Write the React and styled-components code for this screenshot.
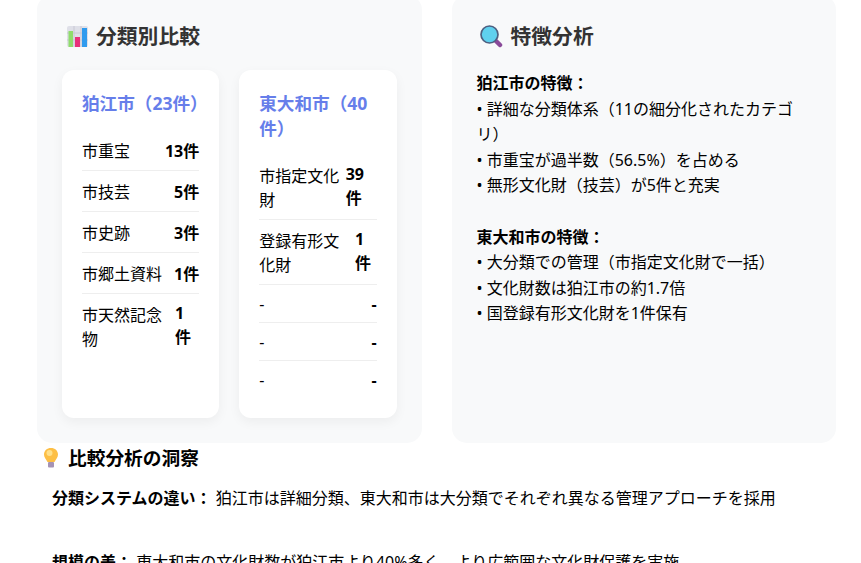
import React from "react";
import styled, { createGlobalStyle } from "styled-components";

const Global = createGlobalStyle`
  html, body { margin: 0; padding: 0; height: 563px; overflow: hidden; background: #fff; }
  body { font-family: "Noto Sans", "Noto Sans CJK JP", sans-serif; font-size: 16px; line-height: 1.6; color: #000; }
`;
const Page = styled.div`
  width: 861px; height: 563px; overflow: hidden; box-sizing: border-box; padding: 0 25px 0 37px;
`;
const Scrolled = styled.div`margin-top: -5px;`;
const Columns = styled.div`
  display: grid; grid-template-columns: 1fr 1fr; gap: 30px;
`;
const Panel = styled.section`
  background: #f8f9fa; border-radius: 15px; padding: 25px; height: 448px; box-sizing: border-box;
`;
const PanelTitle = styled.h3`
  margin: 0 0 17px; font-size: 20.8px; line-height: 33px; font-weight: 700; color: #333;
  display: flex; align-items: center; gap: 4px;
`;
const IconBox = styled.span`
  width: 30px; display: flex; justify-content: center; align-items: center;
`;
const Cards = styled.div`display: grid; grid-template-columns: 1fr 1fr; grid-template-rows: 348px; gap: 20px;`;
const Card = styled.div`
  background: #fff; border-radius: 12px; padding: 20px; box-shadow: 0 4px 12px rgba(0,0,0,.05); box-sizing: border-box;
`;
const CardTitle = styled.h4`
  margin: 0 0 15px; font-size: 17.6px; line-height: normal; font-weight: 700; color: #667eea;
`;
const Row = styled.div`
  display: flex; justify-content: space-between; padding: ${p => p.$empty ? "9px 0 7px" : "8px 0"}; line-height: ${p => p.$empty ? "21px" : "normal"}; font-size: 16px;
  border-bottom: 1px solid ${p => p.$last ? "transparent" : "#eee"};
`;
const Value = styled.span`font-weight: 700;`;
const Body = styled.div`font-size: 16px; line-height: 25.6px; color: #000; padding: 1px 15px 0 0;`;
const Block = styled.p`margin: 0 0 25.6px;`;
const Insights = styled.div`margin-top: 0;`;
const InsightTitle = styled.h3`
  margin: 0 0 14px; font-size: 18.72px; line-height: 29px; font-weight: 700; display: flex; align-items: center; gap: 10px; padding-left: 7px;
`;
const Insight = styled.p`margin: 0 0 38px; padding-left: 15px; font-size: 16px; line-height: 25.6px;`;

const Chart = () => (
  <svg width="21" height="21" viewBox="0 0 21 21">
    <rect width="21" height="21" rx="2" fill="#dfe0e8" />
    <path d="M7 0v21M14 0v21M0 7h21M0 14h21" stroke="#c8c8d4" strokeWidth="1" />
    <rect x="1.5" y="5" width="4.5" height="16" fill="#8fdc6c" />
    <rect x="8" y="11" width="5" height="10" fill="#e8307a" />
    <rect x="15" y="2" width="5" height="19" fill="#2f9bee" />
  </svg>
);
const Lens = () => (
  <svg width="23" height="23" viewBox="0 0 23 23">
    <path d="M15 15l5 5" stroke="#8a4a99" strokeWidth="4.5" strokeLinecap="round" />
    <circle cx="9.5" cy="9.5" r="8.5" fill="#5fd0ee" stroke="#4d5f80" strokeWidth="1.7" />
  </svg>
);
const Bulb = () => (
  <svg width="14" height="20" viewBox="0 0 14 20">
    <path d="M7 0C3 0 0 2.7 0 6.5c0 3 2 4.500 3.500 7.500h7C12 11 14 9.500 14 6.500 14 2.700 11 0 7 0z" fill="#fdbf45" />
    <circle cx="5.500" cy="5" r="3" fill="#ffe08a" />
    <rect x="4" y="14" width="6" height="5.500" rx="1" fill="#a593b5" />
  </svg>
);

const left = [["市重宝","13件"],["市技芸","5件"],["市史跡","3件"],["市郷土資料","1件"],["市天然記念物","1件"]];
const right = [["市指定文化財","39件"],["登録有形文化財","1件"],["-","-"],["-","-"],["-","-"]];
const Rows = ({ items }) => items.map(([a, b], i) => (
  <Row key={i} $last={i === items.length - 1} $empty={a === "-"}><span>{a}</span><Value>{b}</Value></Row>
));

export default function App() {
  return (
    <Page>
      <Global />
      <Scrolled>
        <Columns>
          <Panel>
            <PanelTitle><IconBox><Chart /></IconBox>分類別比較</PanelTitle>
            <Cards>
              <Card><CardTitle>狛江市（23件）</CardTitle><Rows items={left} /></Card>
              <Card><CardTitle>東大和市（40件）</CardTitle><Rows items={right} /></Card>
            </Cards>
          </Panel>
          <Panel>
            <PanelTitle><IconBox><Lens /></IconBox>特徴分析</PanelTitle>
            <Body>
              <Block><strong>狛江市の特徴：</strong><br />• 詳細な分類体系（11の細分化されたカテゴリ）<br />• 市重宝が過半数（56.5%）を占める<br />• 無形文化財（技芸）が5件と充実</Block>
              <Block><strong>東大和市の特徴：</strong><br />• 大分類での管理（市指定文化財で一括）<br />• 文化財数は狛江市の約1.7倍<br />• 国登録有形文化財を1件保有</Block>
            </Body>
          </Panel>
        </Columns>
        <Insights>
          <InsightTitle><Bulb />比較分析の洞察</InsightTitle>
          <Insight><strong>分類システムの違い：</strong> 狛江市は詳細分類、東大和市は大分類でそれぞれ異なる管理アプローチを採用</Insight>
          <Insight><strong>規模の差：</strong> 東大和市の文化財数が狛江市より40%多く、より広範囲な文化財保護を実施</Insight>
        </Insights>
      </Scrolled>
    </Page>
  );
}
